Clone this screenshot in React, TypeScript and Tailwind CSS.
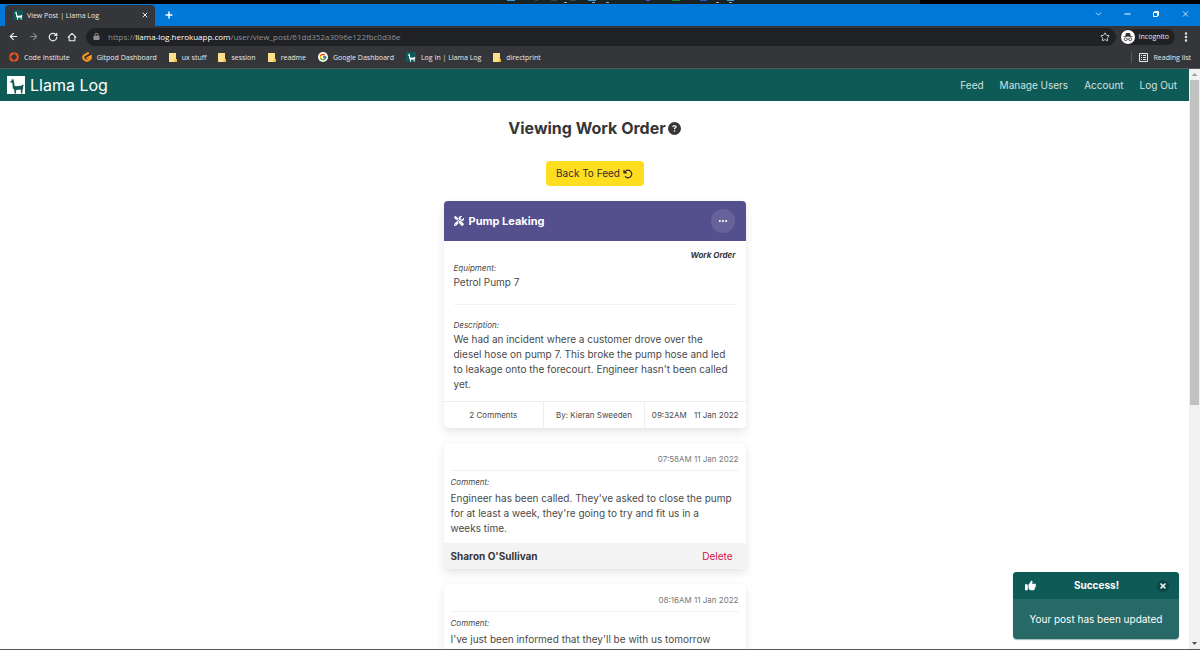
import React from "react";
import {
  FaArrowRotateLeft,
  FaCircleQuestion,
  FaEllipsis,
  FaLock,
  FaScrewdriverWrench,
  FaThumbsUp,
  FaXmark,
} from "react-icons/fa6";
import { FcGoogle } from "react-icons/fc";
import {
  ArrowLeft,
  ArrowRight,
  ChevronDown,
  EllipsisVertical,
  Minus,
  Plus,
  RotateCw,
  Star,
  X,
} from "lucide-react";

function Llama({ className }: { className: string }) {
  return (
    <svg viewBox="0 0 18 18" className={className} aria-hidden="true">
      <path d="M4.8 2.4 5.4 3.8 6.2 2.8 6.7 4.8 7.2 6 7.4 9.4 8.8 10.2 14.4 9.8 15.6 8.6 16.8 9.2 16.2 10.6 16.1 13 15.4 14V17.4H14L13.7 13.6 9.2 13.9 9 17.4H7.6L7.2 13.5 5.8 12.2 5.3 6.8 3.5 6.5 3.4 5.3 4.8 4.6Z" />
    </svg>
  );
}

function LlamaBadge() {
  return (
    <span className="flex h-2.5 w-2.5 shrink-0 items-center justify-center bg-[#0e5a56] text-white">
      <Llama className="h-2.5 w-2.5 fill-current" />
    </span>
  );
}

function NoteIcon() {
  return (
    <svg viewBox="0 0 8 9" className="h-[9px] w-2 shrink-0" aria-hidden="true">
      <path d="M0 0H7V6H8V9H0Z" fill="#ffe08a" />
      <path d="M5.5 9V7L8 6V9Z" fill="#eab92d" />
    </svg>
  );
}

function RingIcon() {
  return (
    <svg viewBox="0 0 10 10" className="h-2.5 w-2.5 shrink-0" aria-hidden="true">
      <circle cx="5" cy="5" r="3.8" fill="none" stroke="#f4511e" strokeWidth="2" strokeDasharray="5.4 .57" />
    </svg>
  );
}

function GitpodIcon() {
  return (
    <svg viewBox="0 0 10 10" className="h-2.5 w-2.5 shrink-0" aria-hidden="true">
      <path d="M6 1.2 2.2 3.3Q1.3 3.8 1.3 4.7V6.1Q1.3 6.9 2.1 7.4L4.2 8.6Q5 9 5.8 8.6L7.9 7.4Q8.7 6.9 8.7 6.1V4.3L5.4 6.1" fill="none" stroke="#ff9a1f" strokeWidth="2.1" strokeLinecap="round" />
    </svg>
  );
}

function GoogleIcon() {
  return (
    <span className="flex h-2.5 w-2.5 shrink-0 items-center justify-center rounded-full bg-white">
      <FcGoogle className="h-2 w-2" />
    </span>
  );
}

const bookmarks = [
  { label: "Code Institute", icon: <RingIcon /> },
  { label: "Gitpod Dashboard", icon: <GitpodIcon /> },
  { label: "ux stuff", icon: <NoteIcon /> },
  { label: "session", icon: <NoteIcon /> },
  { label: "readme", icon: <NoteIcon /> },
  { label: "Google Dashboard", icon: <GoogleIcon /> },
  { label: "Log In | Llama Log", icon: <LlamaBadge /> },
  { label: "directprint", icon: <NoteIcon /> },
];

const links = ["Feed", "Manage Users", "Account", "Log Out"];

type CommentData = { time: string; text: string; author?: string };

const comments: CommentData[] = [
  {
    time: "07:58AM 11 Jan 2022",
    text: "Engineer has been called. They've asked to close the pump\nfor at least a week, they're going to try and fit us in a\nweeks time.",
    author: "Sharon O'Sullivan",
  },
  {
    time: "08:16AM 11 Jan 2022",
    text: "I've just been informed that they'll be with us tomorrow",
  },
];

function TaskbarEdge() {
  return (
    <div className="flex h-1 shrink-0 justify-center bg-black">
      <svg viewBox="0 0 600 4" className="ml-10 h-1 w-[600px]" aria-hidden="true">
        <rect width="600" height="4" fill="#1b2224" />
        <path d="M187 0h8M407 0h7" stroke="#2ea3dd" strokeWidth="2" />
        <path d="M215 0h3M231 0h6M250 0h6" stroke="#3a4347" strokeWidth="2" />
        <path d="M268 0h8" stroke="#2ea3dd" strokeWidth="2" />
        <path d="M326 0h4" stroke="#5a4be0" strokeWidth="2" />
        <path d="M352 0h8" stroke="#128a12" strokeWidth="2" />
        <path d="M380 0h7" stroke="#2456d6" strokeWidth="2" />
        <path d="M244 2.5h3M272 2.5h3M286 2.5h3M396 2.5h3M409 2.5h3" stroke="#9aa3a8" />
      </svg>
    </div>
  );
}

function BrowserChrome() {
  return (
    <header className="flex shrink-0 flex-col font-['Open_Sans','Noto_Sans',sans-serif] text-[8px] leading-none text-[#e8eaed]">
      <TaskbarEdge />
      <div className="flex h-[22px] items-end bg-[#0078d7]">
        <div className="ml-[5px] flex h-[21px] w-[150px] items-center gap-1 rounded-t bg-[#35363a] pr-[5px] pb-px pl-2">
          <LlamaBadge />
          <span className="flex-1 whitespace-nowrap text-[7px]">View Post | Llama Log</span>
          <button aria-label="Close tab" className="p-px">
            <X className="h-2 w-2" strokeWidth={3} />
          </button>
        </div>
        <button aria-label="New tab" className="flex h-[21px] w-7 items-center justify-center pb-px text-white">
          <Plus className="h-[10px] w-[10px]" strokeWidth={3.5} />
        </button>
        <div className="ml-auto flex h-[22px] items-center gap-5 pr-[10px] pb-[3px] text-white">
          <button aria-label="Search tabs" className="flex h-[10px] w-[9px] items-center"><ChevronDown className="h-[10px] w-[10px]" strokeWidth={2} /></button>
          <button aria-label="Minimize" className="flex h-[10px] w-[9px] items-center"><Minus className="h-[10px] w-[10px]" strokeWidth={3} /></button>
          <button aria-label="Restore" className="flex h-[10px] w-[9px] items-center">
            <svg viewBox="0 0 8 8" className="h-2 w-2" fill="none" stroke="currentColor"><path d="M1.5 2.5h4v4h-4zM2.5 2.5v-1h4v4h-1" /></svg>
          </button>
          <button aria-label="Close" className="flex h-[10px] w-[9px] items-center"><X className="h-[10px] w-[10px]" strokeWidth={2} /></button>
        </div>
      </div>
      <div className="flex h-[21px] items-center gap-[9px] bg-[#35363a] pr-2 pl-2">
        <button aria-label="Back"><ArrowLeft className="h-[11px] w-[11px]" strokeWidth={2.5} /></button>
        <button aria-label="Forward" className="text-[#85878a]"><ArrowRight className="h-[11px] w-[11px]" strokeWidth={2.5} /></button>
        <button aria-label="Reload"><RotateCw className="h-[10px] w-[10px]" strokeWidth={3} /></button>
        <button aria-label="Home">
          <svg viewBox="0 0 10 10" className="h-[10px] w-[10px]" fill="none" stroke="currentColor" strokeWidth="1.1"><path d="M.8 5.4 5 1.4 9.2 5.4M2.2 4.6V8.8H7.8V4.6" /></svg>
        </button>
        <div className="flex h-[18px] flex-1 items-center justify-between rounded-full bg-[#202124] pr-[6px] pl-[7px]">
          <span className="flex items-center gap-2 whitespace-nowrap text-[#8d9196]">
            <FaLock className="h-[7px] w-[7px]" />
            <span>
              https://<span className="text-white">llama-log.herokuapp.com</span>/user/view_post/61dd352a3096e122fbc0d36e
            </span>
          </span>
          <button aria-label="Bookmark this page"><Star className="h-[10px] w-[10px]" strokeWidth={2} /></button>
        </div>
        <div className="-ml-1 flex h-4 items-center gap-1 rounded-full bg-[#202124] pr-[6px]">
          <svg viewBox="0 0 14 14" className="h-[14px] w-[14px]" aria-hidden="true">
            <circle cx="7" cy="7" r="7" fill="#fff" />
            <path d="M5 3h4l.8 3H4.2ZM2.5 6.2h9v.9h-9Z" fill="#35363a" />
            <path d="M3.2 9.3a1.5 1.5 0 1 0 3 0 1.5 1.5 0 1 0-3 0M7.8 9.3a1.5 1.5 0 1 0 3 0 1.5 1.5 0 1 0-3 0M6.2 9.2h1.6" fill="none" stroke="#35363a" strokeWidth=".8" />
          </svg>
          <span className="text-[7px]">Incognito</span>
        </div>
        <button aria-label="Browser menu" className="-ml-1"><EllipsisVertical className="h-3 w-3" strokeWidth={3} /></button>
      </div>
      <nav aria-label="Bookmarks" className="flex h-[22px] items-center justify-between border-b border-[#55575b] bg-[#35363a] pr-[9px] pb-px pl-[9px] text-[7px]">
        <div className="flex items-center gap-3">
          {bookmarks.map((b) => (
            <a key={b.label} href="#" className="flex items-center gap-[5px] whitespace-nowrap">
              {b.icon}
              {b.label}
            </a>
          ))}
        </div>
        <button className="flex h-[11px] items-center gap-[6px] border-l border-[#54565a] pl-[7px]">
          <svg viewBox="0 0 9 9" className="h-[9px] w-[9px]" fill="none" stroke="currentColor" aria-hidden="true">
            <path d="M.5.5h8v8h-8zM2 2.5h1M4 2.5h3M2 4.5h1M4 4.5h3M2 6.5h1M4 6.5h3" />
          </svg>
          Reading list
        </button>
      </nav>
    </header>
  );
}

function SiteNav() {
  return (
    <nav aria-label="Main" className="flex h-8 items-center justify-between bg-[#0e5a56] pr-3 pl-[7px] text-[10px] text-[#d3e2e1]">
      <a href="#" className="flex items-center gap-[5px] text-base text-white">
        <span className="flex h-[18px] w-[18px] items-center justify-center bg-white text-[#0e5a56]">
          <Llama className="h-[18px] w-[18px] fill-current" />
        </span>
        Llama Log
      </a>
      <div className="flex gap-4">
        {links.map((l) => (
          <a key={l} href="#">{l}</a>
        ))}
      </div>
    </nav>
  );
}

function WorkOrder() {
  return (
    <article className="rounded-sm bg-white shadow-[0_4px_10px_rgba(10,10,10,0.1),0_0_1px_rgba(10,10,10,0.08)]">
      <header className="flex h-10 items-center justify-between rounded-t-sm bg-[#54508d] pr-[11px] pl-[10px] text-white">
        <h2 className="flex items-center gap-[5px] text-[11px] font-bold">
          <FaScrewdriverWrench className="h-[10px] w-[10px]" />
          Pump Leaking
        </h2>
        <button aria-label="More options" className="flex h-6 w-6 items-center justify-center rounded-full bg-[#67639a]">
          <FaEllipsis className="h-[10px] w-[10px]" />
        </button>
      </header>
      <div className="px-[10px] pt-2 pb-[9px]">
        <p className="text-right text-[8px] leading-[13px] font-bold text-[#363636] italic">Work Order</p>
        <p className="text-[8px] leading-[13px] italic">Equipment:</p>
        <p className="text-[10px] leading-[15px]">Petrol Pump 7</p>
        <hr className="my-[14px] border-[#f2f2f2]" />
        <p className="text-[8px] leading-[13px] italic">Description:</p>
        <p className="max-w-[278px] text-[10px] leading-[15px]">
          We had an incident where a customer drove over the diesel hose on pump 7. This broke the pump hose and led to leakage onto the forecourt. Engineer hasn't been called yet.
        </p>
      </div>
      <footer className="grid h-[27px] grid-cols-3 divide-x divide-[#ededed] border-t border-[#ededed] text-[8px]">
        <span className="flex items-center justify-center">2 Comments</span>
        <span className="flex items-center justify-center">By: Kieran Sweeden</span>
        <span className="flex items-center justify-between px-[7px]">
          <span>09:32AM</span>
          <span>11 Jan 2022</span>
        </span>
      </footer>
    </article>
  );
}

function Comment({ time, text, author }: CommentData) {
  return (
    <article className="rounded-sm bg-white shadow-[0_4px_10px_rgba(10,10,10,0.1),0_0_1px_rgba(10,10,10,0.08)]">
      <div className="px-[7px] pt-[9px] pb-[7px]">
        <p className="text-right text-[8px] leading-[14px] text-[#777]">{time}</p>
        <hr className="mt-1 mb-[5px] border-[#f2f2f2]" />
        <p className="text-[8px] leading-[13px] italic">Comment:</p>
        <p className="mt-[2px] text-[10px] leading-[15px] whitespace-pre-line">{text}</p>
      </div>
      {author && (
        <footer className="flex h-[26px] items-center justify-between rounded-b-sm bg-[#f4f4f4] pr-[13px] pl-[7px] text-[10px]">
          <strong className="font-bold text-[#363636]">{author}</strong>
          <button className="text-[#d3134a]">Delete</button>
        </footer>
      )}
    </article>
  );
}

function Toast() {
  return (
    <div role="status" className="absolute right-[10px] bottom-[10px] w-[166px] rounded-sm bg-[#266966] text-[10px] text-white shadow-[0_1px_1px_rgba(14,90,86,0.4)]">
      <div className="flex h-[27px] items-center justify-between rounded-t-sm bg-[#0e5a56] pr-[10px] pl-3">
        <FaThumbsUp className="h-[11px] w-[11px]" />
        <strong className="font-bold">Success!</strong>
        <button aria-label="Dismiss" className="flex h-3 w-3 items-center justify-center rounded-full bg-[#0b4845]">
          <FaXmark className="h-2 w-2" strokeWidth={40} stroke="currentColor" />
        </button>
      </div>
      <p className="flex h-10 items-center justify-center whitespace-nowrap">Your post has been updated</p>
    </div>
  );
}

function Scrollbar() {
  return (
    <div aria-hidden="true" className="flex w-[11px] shrink-0 flex-col items-center bg-[#f1f1f1]">
      <svg viewBox="0 0 11 11" className="h-[11px] w-[11px]"><path d="M2.5 7 5.5 4 8.5 7Z" fill="#a3a3a3" /></svg>
      <div className="h-[56%] w-[9px] bg-[#c1c1c1]" />
      <svg viewBox="0 0 11 11" className="mt-auto h-[11px] w-[11px]"><path d="M3 4 5.5 7 8 4Z" fill="#505050" /></svg>
    </div>
  );
}

export default function App() {
  return (
    <div className="flex h-screen flex-col overflow-hidden border-b border-[#55575b] bg-white">
      <BrowserChrome />
      <div className="flex min-h-0 flex-1 font-['Inter','Liberation_Sans',sans-serif] text-[#4a4a4a]">
        <div className="relative min-w-0 flex-1 overflow-hidden">
          <SiteNav />
          <main className="mx-auto flex w-[302px] max-w-full flex-col pt-4">
            <h1 className="flex items-center justify-center gap-[2px] text-base leading-[22px] font-bold whitespace-nowrap text-[#363636]">
              Viewing Work Order
              <FaCircleQuestion className="h-[13px] w-[13px]" />
            </h1>
            <button className="mt-[22px] mb-[15px] flex h-[25px] w-[98px] items-center justify-center gap-[3px] self-center rounded-sm bg-[#ffdd1f] text-[10px] whitespace-nowrap text-[#2f2f2f]">
              Back To Feed
              <FaArrowRotateLeft className="h-[10px] w-[10px]" />
            </button>
            <div className="flex flex-col gap-[15px]">
              <WorkOrder />
              {comments.map((c) => (
                <Comment key={c.time} {...c} />
              ))}
            </div>
          </main>
          <Toast />
        </div>
        <Scrollbar />
      </div>
    </div>
  );
}
